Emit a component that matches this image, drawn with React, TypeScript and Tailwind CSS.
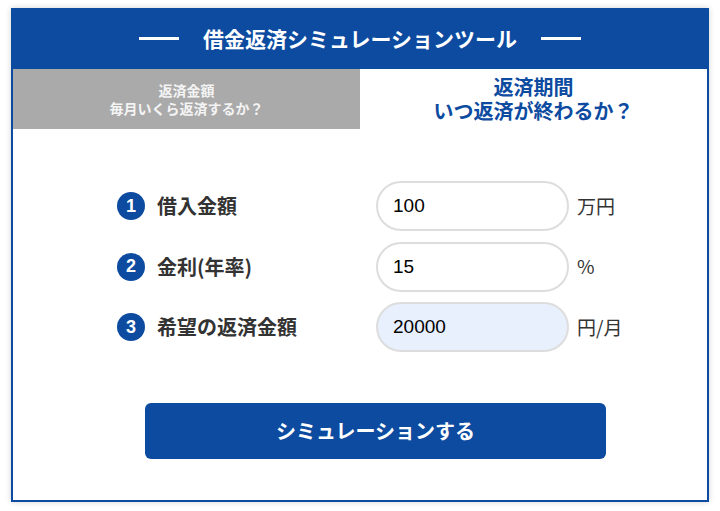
import { useState } from 'react';

const rows = [
  { no: '1', label: '借入金額', value: '100', unit: '万円', active: false },
  { no: '2', label: '金利(年率)', value: '15', unit: '%', active: false },
  { no: '3', label: '希望の返済金額', value: '20000', unit: '円/月', active: true },
];

export default function App() {
  const [tab, setTab] = useState(1);

  return (
    <div className="min-h-screen bg-white px-[11px] pt-2 font-['Noto_Sans_CJK_JP','Liberation_Sans',sans-serif]">
      <div className="flex h-[494px] w-[698px] flex-col border-2 border-[#0d4ba0] bg-white shadow-[0_0_6px_rgba(0,0,0,0.18)]">
        {/* Header */}
        <div className="-mx-[2px] -mt-[2px] flex h-[61px] items-center justify-center bg-[#0d4ba0] text-white">
          <span className="h-[3px] w-[40px] bg-white" />
          <h1 className="mx-[24px] text-[21px] leading-none font-bold">借金返済シミュレーションツール</h1>
          <span className="h-[3px] w-[40px] bg-white" />
        </div>

        {/* Tabs */}
        <div className="flex h-[60px]">
          <button
            onClick={() => setTab(0)}
            className={`flex flex-1 flex-col items-center justify-center text-[14px] font-bold ${
              tab === 0 ? 'bg-white text-[#0d4ba0]' : 'bg-[#aaaaaa] text-[#f4f4f4]'
            }`}
          >
            <span className="block leading-[18px]">返済金額</span>
            <span className="block leading-[18px]">毎月いくら返済するか？</span>
          </button>
          <button
            onClick={() => setTab(1)}
            className={`flex flex-1 flex-col items-center justify-center text-[20px] font-bold ${
              tab === 1 ? 'bg-white text-[#0d4ba0]' : 'bg-[#aaaaaa] text-[#f4f4f4]'
            }`}
          >
            <span className="block leading-[24px]">返済期間</span>
            <span className="block leading-[24px]">いつ返済が終わるか？</span>
          </button>
        </div>

        {/* Form */}
        <div className="mt-[52px] flex flex-col gap-[10.5px] pl-[104px]">
          {rows.map((row) => (
            <div key={row.no} className="flex h-[50px] items-center">
              <div className="flex w-[259px] items-center">
                <span className="flex h-[28px] w-[28px] items-center justify-center rounded-full bg-[#0d4ba0] font-['Liberation_Sans',sans-serif] text-[18px] font-bold text-white">
                  {row.no}
                </span>
                <span className="ml-[12px] text-[20px] font-bold text-[#333]">{row.label}</span>
              </div>
              <input
                defaultValue={row.value}
                className={`h-[50px] w-[193px] rounded-full border-2 border-[#dddddd] px-[15px] font-['Liberation_Sans',sans-serif] text-[19px] text-black outline-none ${
                  row.active ? 'bg-[#e8f0fe]' : 'bg-white'
                }`}
              />
              <span className="ml-[8px] text-[19px] text-[#333]">{row.unit}</span>
            </div>
          ))}
        </div>

        <div className="mt-[51px] flex pl-[132px]">
          <button className="h-[56px] w-[461px] rounded-[6px] bg-[#0d4ba0] text-[20px] font-bold text-white">
            シミュレーションする
          </button>
        </div>
      </div>
    </div>
  );
}
